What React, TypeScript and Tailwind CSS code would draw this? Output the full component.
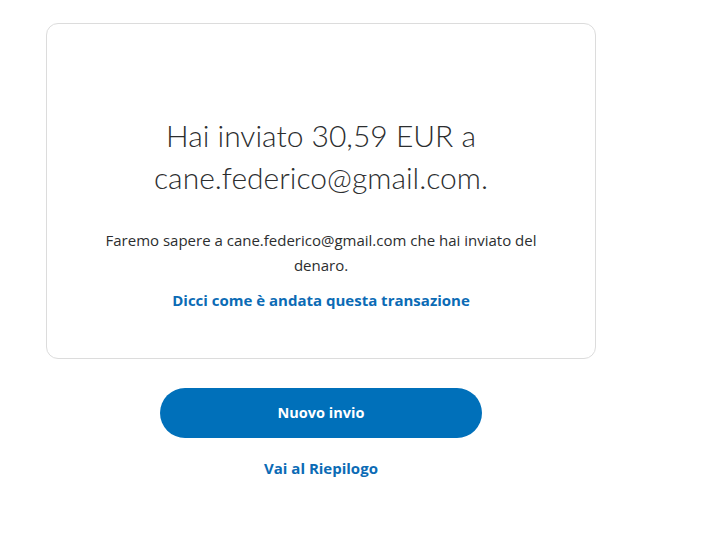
import React from "react";

export default function App() {
  return (
    <div className="min-h-[534px] w-full bg-white pl-[46px] pt-[23px] font-['Open_Sans',sans-serif]">
      <div className="flex w-[550px] flex-col items-center">
        <div className="flex h-[336px] w-full flex-col items-center rounded-[12px] border border-[#dcdcdc] px-[50px] pt-[90px]">
          <h1 className="text-center font-['Lato',sans-serif] text-[30px] font-light leading-[42px] text-[#2c2e2f]">
            Hai inviato 30,59 EUR a
            <br />
            cane.federico@gmail.com.
          </h1>
          <p className="mt-[30px] text-center text-[15px] leading-[25px] text-[#2c2e2f]">
            Faremo sapere a cane.federico@gmail.com che hai inviato del denaro.
          </p>
          <a
            href="#"
            className="mt-[10px] text-[15px] font-bold leading-[24px] text-[#0b6bb5]"
          >
            Dicci come è andata questa transazione
          </a>
        </div>
        <button className="mt-[29px] h-[50px] w-[322px] rounded-full bg-[#0070ba] text-[14.5px] font-bold text-white">
          Nuovo invio
        </button>
        <a
          href="#"
          className="mt-[20px] text-[15px] font-bold leading-[20px] text-[#0b6bb5]"
        >
          Vai al Riepilogo
        </a>
      </div>
    </div>
  );
}
